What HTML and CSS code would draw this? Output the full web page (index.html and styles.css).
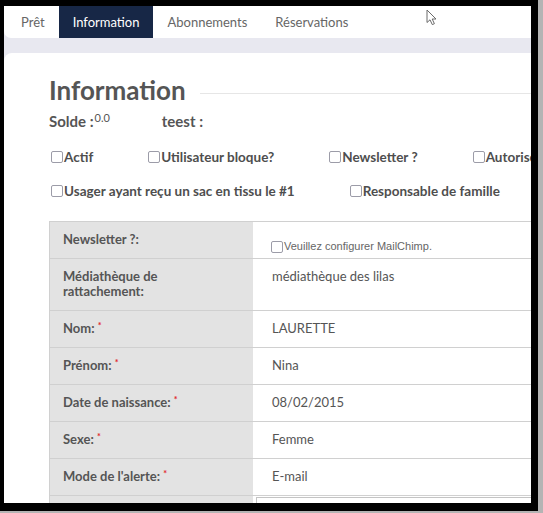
FILE: index.html
```html
<!DOCTYPE html>
<html lang="fr">
<head>
  <meta charset="UTF-8" />
  <meta name="viewport" content="width=device-width, initial-scale=1" />
  <title>Information usager</title>
  <link rel="stylesheet" href="styles.css">
</head>
<body>

  <div class="frame">
    <div class="window">

      <ul class="tabs">
        <li>Prêt</li>
        <li class="active">Information</li>
        <li>Abonnements</li>
        <li>Réservations</li>
      </ul>

      <div class="card">
        <div class="title-row">
          <h2>Information</h2>
          <span class="rule"></span>
        </div>

        <div class="balance">
          <b>Solde :</b><span class="amount">0.0</span>
          <b class="teest">teest :</b>
        </div>

        <div class="checks">
          <label><input type="checkbox">Actif</label>
          <label><input type="checkbox">Utilisateur bloque?</label>
          <label><input type="checkbox">Newsletter ?</label>
          <label><input type="checkbox">Autorise la diffusion</label>
        </div>
        <div class="checks">
          <label><input type="checkbox">Usager ayant reçu un sac en tissu le #1</label>
          <label><input type="checkbox">Responsable de famille</label>
        </div>

        <!-- fiche usager -->
        <div class="sheet">
          <div class="row">
            <div class="k">Newsletter ?:</div>
            <div class="v mail"><input type="checkbox">Veuillez configurer MailChimp.</div>
          </div>
          <div class="row">
            <div class="k">Médiathèque de rattachement:</div>
            <div class="v">médiathèque des lilas</div>
          </div>
          <div class="row">
            <div class="k">Nom: <span class="req">*</span></div>
            <div class="v">LAURETTE</div>
          </div>
          <div class="row">
            <div class="k">Prénom: <span class="req">*</span></div>
            <div class="v">Nina</div>
          </div>
          <div class="row">
            <div class="k">Date de naissance: <span class="req">*</span></div>
            <div class="v">08/02/2015</div>
          </div>
          <div class="row">
            <div class="k">Sexe: <span class="req">*</span></div>
            <div class="v">Femme</div>
          </div>
          <div class="row">
            <div class="k">Mode de l'alerte: <span class="req">*</span></div>
            <div class="v">E-mail</div>
          </div>
          <div class="row">
            <div class="k">Adresse:</div>
            <div class="v field"><input type="text"></div>
          </div>
        </div>
      </div>

      <svg class="cursor" width="12" height="17" viewBox="0 0 12 17">
        <path d="M1 1 L1 13.5 L4 10.8 L6.3 15.6 L8.4 14.7 L6.2 10 L10 10 Z" fill="#fff" stroke="#6a6a6a" stroke-width="1" stroke-linejoin="round"/>
      </svg>

    </div>
  </div>

</body>
</html>
```

FILE: styles.css
```css
html, body {
  margin: 0;
  padding: 0;
}

body {
  background: #b4b4b4;
  font-family: Lato, "Open Sans", sans-serif;
  color: #555;
  width: 543px;
  height: 513px;
  overflow: hidden;
}

.frame {
  width: 538px;
  height: 511px;
  box-sizing: border-box;
  padding: 6px 7px 8px 4px;
  background: #000;
}

.window {
  position: relative;
  height: 100%;
  overflow: hidden;
  background: #e8e8f0;
}

.tabs {
  display: flex;
  margin: 0;
  padding: 0 0 0 3px;
  list-style: none;
  height: 32px;
  background: #fff;
  border-bottom-left-radius: 7px;
}

.tabs li {
  padding: 0 14px;
  line-height: 32px;
  font-size: 13px;
  color: #666;
}

.tabs li.active {
  background: #172746;
  color: #fff;
}

.card {
  margin-top: 15px;
  height: 600px;
  padding: 22px 0 0 45px;
  background: #fff;
  border-top-left-radius: 8px;
}

.title-row {
  display: flex;
  align-items: center;
}

.title-row h2 {
  margin: 0;
  font-size: 26px;
  line-height: 31px;
  font-weight: bold;
  color: #555;
}

.rule {
  flex: 1;
  height: 1px;
  margin: 5px 0 0 14px;
  background: #e6e6e6;
}

.balance {
  margin-top: 6px;
  font-size: 15px;
  line-height: 18px;
  color: #555;
}

.amount {
  font-size: 11px;
  line-height: 0;
  vertical-align: 5px;
  margin-left: 1px;
}

.teest {
  margin-left: 48px;
}

.checks {
  display: flex;
  gap: 55px;
  white-space: nowrap;
  margin-top: 19px;
  padding-left: 2px;
}

.checks + .checks {
  margin-top: 18px;
}

.checks label {
  display: flex;
  align-items: center;
  font-size: 13.5px;
  line-height: 16px;
  font-weight: bold;
  color: #4e4e4e;
}

input[type="checkbox"] {
  appearance: none;
  width: 12px;
  height: 12px;
  margin: 0 1px 0 0;
  border: 1px solid #9c9ca8;
  border-radius: 2px;
  background: #fff;
  box-sizing: border-box;
}

.sheet {
  margin-top: 22px;
  width: 560px;
  border-top: 1px solid #d0d0d0;
  border-left: 1px solid #d0d0d0;
}

.row {
  display: grid;
  grid-template-columns: 203px 1fr;
  border-bottom: 1px solid #d0d0d0;
  font-size: 13px;
  line-height: 15px;
}

.row .k {
  background: #e3e3e3;
  padding: 10px 40px 11px 13px;
  font-weight: bold;
  color: #555;
}

.row .v {
  padding: 10px 19px 11px;
  color: #555;
}

.req {
  color: #e2262b;
  font-size: 9px;
  line-height: 0;
  vertical-align: 4px;
}

.row .v.mail {
  display: flex;
  align-items: center;
  align-self: start;
  padding: 18px 18px 4px;
  font-family: "Liberation Sans", Arial, sans-serif;
  font-size: 11px;
  line-height: 13px;
  color: #666;
}

.row .v.field {
  padding: 1px 3px;
}

.field input {
  display: block;
  width: 100%;
  height: 32px;
  box-sizing: border-box;
  border: 1px solid #c4c4c4;
}

.cursor {
  position: absolute;
  left: 422px;
  top: 3px;
}
```
